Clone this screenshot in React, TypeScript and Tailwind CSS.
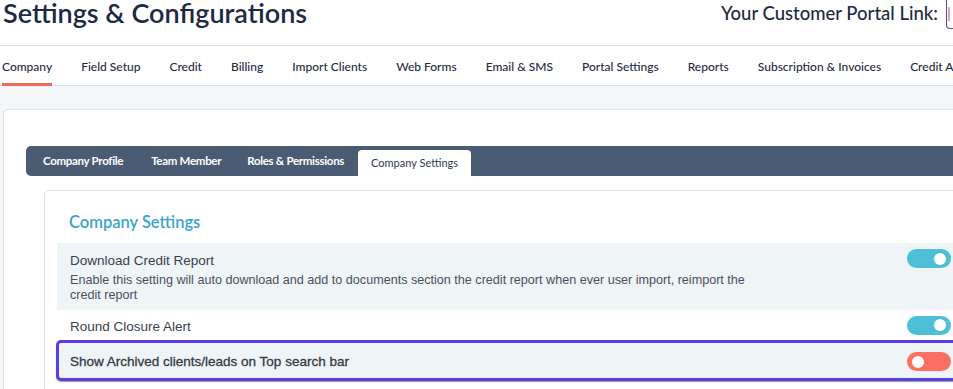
import React from 'react';

const navTabs = [
  'Company',
  'Field Setup',
  'Credit',
  'Billing',
  'Import Clients',
  'Web Forms',
  'Email & SMS',
  'Portal Settings',
  'Reports',
  'Subscription & Invoices',
  'Credit Analysis',
];

const subTabs = ['Company Profile', 'Team Member', 'Roles & Permissions', 'Company Settings'];

function Toggle({ on }: { on: boolean }) {
  return (
    <span
      className={`flex h-[19px] w-[44px] shrink-0 items-center rounded-full px-[5px] ${
        on ? 'justify-end bg-[#4dbfd6]' : 'justify-start bg-[#fc7063]'
      }`}
    >
      <span className="h-[12px] w-[12px] rounded-full bg-white" />
    </span>
  );
}

export default function App() {
  return (
    <div className="h-[389px] w-[953px] overflow-hidden bg-white">
      <div className="w-[1020px] font-['Lato',sans-serif]">
        {/* header */}
        <header className="flex h-[45px] items-start">
          <h1 className="ml-[3px] text-[27px] leading-[26px] font-semibold text-[#1e2a45]">
            Settings &amp; Configurations
          </h1>
          <div className="ml-auto flex items-start gap-[8px]">
            <span className="mt-[2px] text-[18.5px] leading-[22px] font-medium text-[#1e2a45]">
              Your Customer Portal Link:
            </span>
            <span className="flex h-[29px] w-[74px] items-center rounded-b-[4px] border border-t-0 border-[#5a4a8c] pl-[1px]">
              <span className="h-[14px] w-[2px] bg-[#eaa3a3]" />
            </span>
          </div>
        </header>

        {/* main nav */}
        <nav className="flex h-[41px] gap-[29px] border-y border-[#d5dce5] pl-[2px]">
          {navTabs.map((t, i) => (
            <button
              key={t}
              className={`-mb-px flex h-[40px] items-center whitespace-nowrap pt-[2px] text-[12px] font-medium text-[#1f2a44] ${
                i === 0 ? 'border-b-[3px] border-[#f06a5a] pt-[5px]' : ''
              }`}
            >
              {t}
            </button>
          ))}
        </nav>

        {/* content */}
        <div className="bg-[#f5f6fa] pt-[23px]">
          <div className="mx-[3px] rounded-[5px] border border-[#dfe3e9] bg-white px-[22px] pt-[36px] pb-[20px]">
            <div className="flex h-[30px] items-end rounded-[5px] bg-[#4a5c73] pl-[3px]">
              {subTabs.map((t, i) =>
                i === 3 ? (
                  <button
                    key={t}
                    className="flex h-[26px] items-center rounded-t-[4px] bg-white px-[13px] text-[11px] text-[#2f3a4c]"
                  >
                    {t}
                  </button>
                ) : (
                  <button
                    key={t}
                    className={`flex h-full items-center text-[11.5px] font-bold tracking-[-0.3px] text-white ${
                      i === 2 ? 'pr-[14px] pl-[12px]' : 'px-[14px]'
                    }`}
                  >
                    {t}
                  </button>
                )
              )}
            </div>

            <div className="mx-[18px] mt-[14px] rounded-[5px] border border-[#d6e3ee] px-[12px] pt-[19px] pb-[20px]">
              <h2 className="ml-[12px] mb-[9px] text-[16.5px] leading-[24px] font-semibold text-[#3aa4cf]">
                Company Settings
              </h2>

              <div className="font-['Liberation_Sans',Arial,sans-serif]">
                <div className="flex items-start justify-between bg-[#eff4f7] pt-[9px] pr-[12px] pb-[7px] pl-[13px]">
                  <div>
                    <p className="text-[13.5px] leading-[18px] text-[#3a414e]">Download Credit Report</p>
                    <p className="mt-[3px] max-w-[695px] text-[12.6px] leading-[15px] text-[#4a505c]">
                      Enable this setting will auto download and add to documents section the credit report when
                      ever user import, reimport the credit report
                    </p>
                  </div>
                  <div className="-mt-[3px]">
                    <Toggle on />
                  </div>
                </div>

                <div className="flex h-[30px] items-center justify-between pr-[12px] pl-[13px]">
                  <p className="pt-[4px] text-[13.5px] leading-[18px] text-[#3a414e]">Round Closure Alert</p>
                  <Toggle on />
                </div>

                <div className="-ml-px flex h-[41px] items-center justify-between rounded-[5px] border-[3px] border-[#583ee6] bg-[#eff4f7] pt-[2px] pr-[9px] pl-[11px] shadow-[0_1px_1px_rgba(0,0,0,0.4)]">
                  <p className="text-[13.5px] leading-[18px] text-[#343a46] [-webkit-text-stroke:0.3px_#343a46]">
                    Show Archived clients/leads on Top search bar
                  </p>
                  <Toggle on={false} />
                </div>
              </div>
            </div>
          </div>
        </div>
      </div>
    </div>
  );
}
